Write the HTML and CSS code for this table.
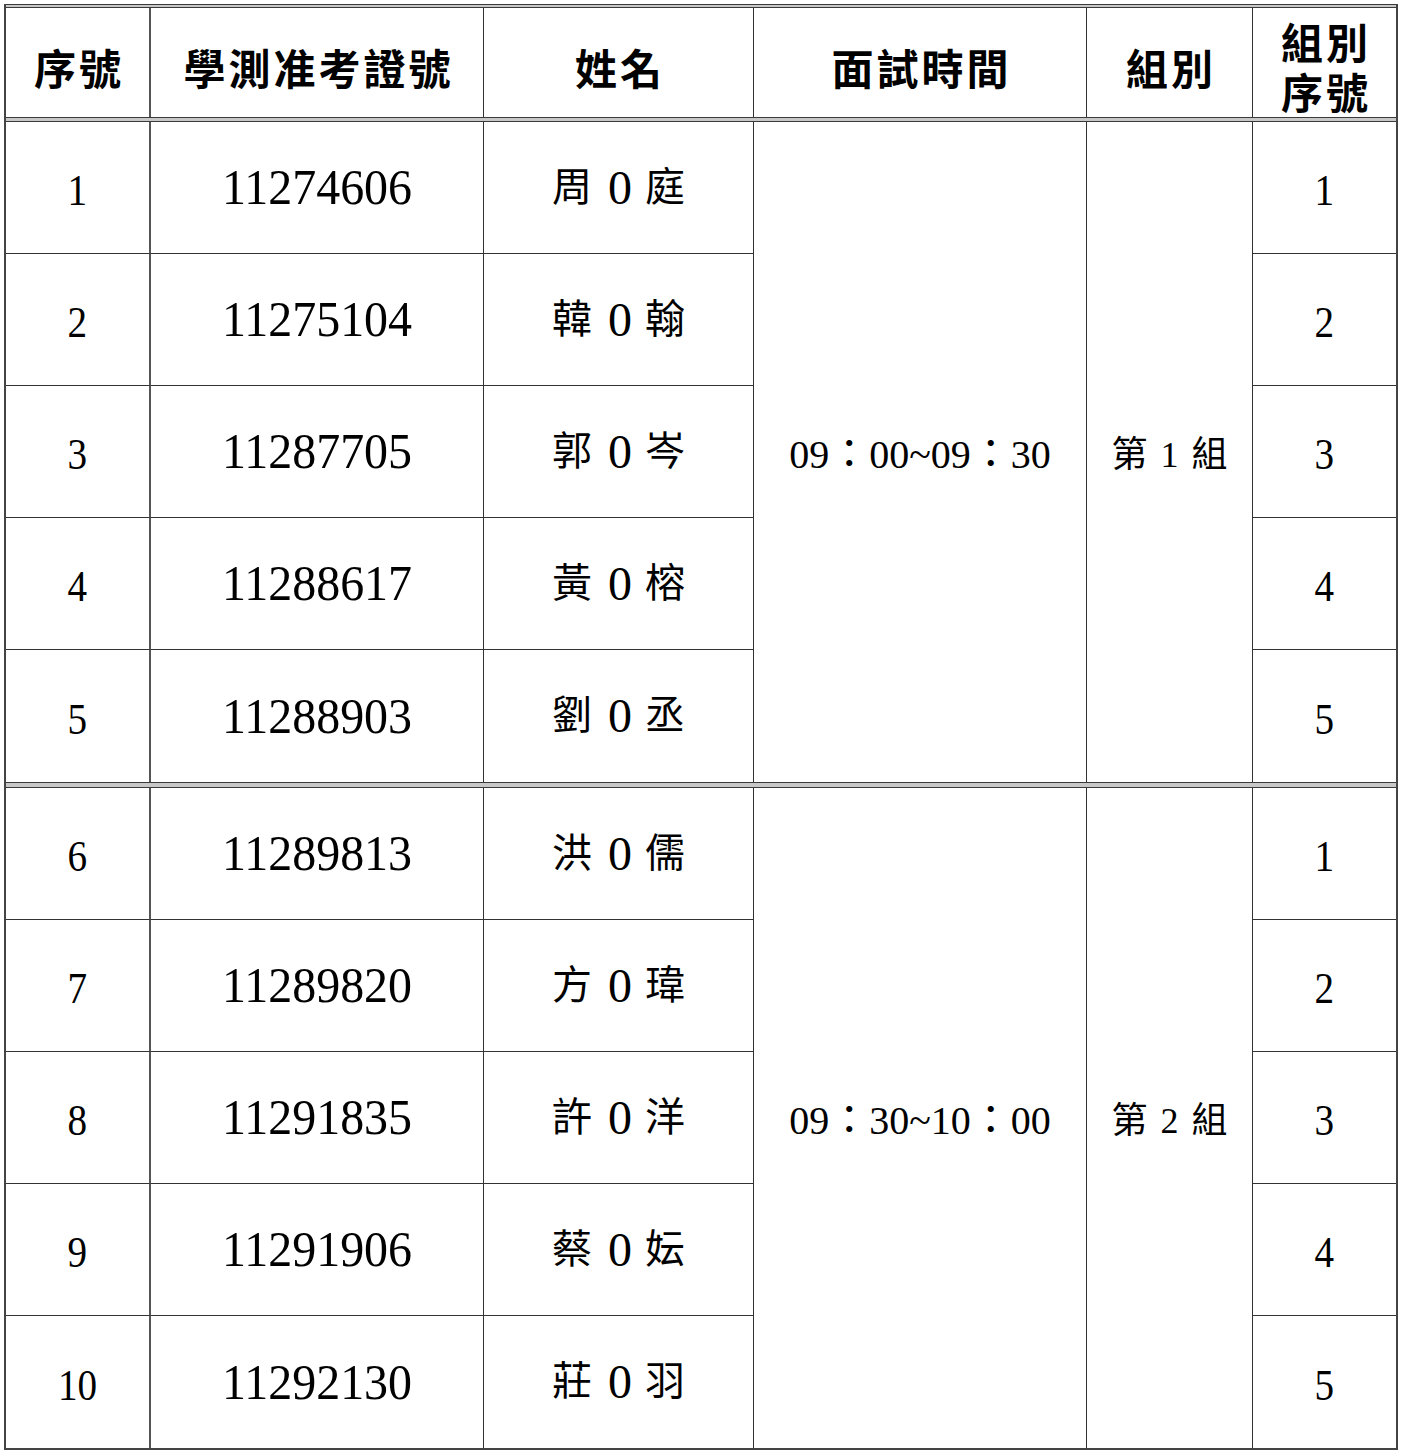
FILE: index.html
```html
<!DOCTYPE html>
<html lang="zh-Hant">
<head>
<meta charset="utf-8">
<title>面試時間表</title>
<link rel="stylesheet" href="styles.css">
</head>
<body>
<div class="sheet">
  <div class="sep sep-top"></div>

  <div class="cell hd c1">序號</div>
  <div class="cell hd">學測准考證號</div>
  <div class="cell hd">姓名</div>
  <div class="cell hd">面試時間</div>
  <div class="cell hd">組別</div>
  <div class="cell hd last two"><span>組別</span><span>序號</span></div>

  <div class="sep sep-head"></div>

  <div class="cell c1"><span class="sn">1</span></div>
  <div class="cell"><span class="en">11274606</span></div>
  <div class="cell nm">周 <span class="z">0</span> 庭</div>
  <div class="cell span5 tm">09：00~09：30</div>
  <div class="cell span5 gp">第 1 組</div>
  <div class="cell last"><span class="sn">1</span></div>

  <div class="cell c1"><span class="sn">2</span></div>
  <div class="cell"><span class="en">11275104</span></div>
  <div class="cell nm">韓 <span class="z">0</span> 翰</div>
  <div class="cell last"><span class="sn">2</span></div>

  <div class="cell c1"><span class="sn">3</span></div>
  <div class="cell"><span class="en">11287705</span></div>
  <div class="cell nm">郭 <span class="z">0</span> 岑</div>
  <div class="cell last"><span class="sn">3</span></div>

  <div class="cell c1"><span class="sn">4</span></div>
  <div class="cell"><span class="en">11288617</span></div>
  <div class="cell nm">黃 <span class="z">0</span> 榕</div>
  <div class="cell last"><span class="sn">4</span></div>

  <div class="cell c1 end"><span class="sn">5</span></div>
  <div class="cell end"><span class="en">11288903</span></div>
  <div class="cell nm end">劉 <span class="z">0</span> 丞</div>
  <div class="cell last end"><span class="sn">5</span></div>

  <div class="sep sep-mid"></div>

  <div class="cell c1"><span class="sn">6</span></div>
  <div class="cell"><span class="en">11289813</span></div>
  <div class="cell nm">洪 <span class="z">0</span> 儒</div>
  <div class="cell span5 tm">09：30~10：00</div>
  <div class="cell span5 gp">第 2 組</div>
  <div class="cell last"><span class="sn">1</span></div>

  <div class="cell c1"><span class="sn">7</span></div>
  <div class="cell"><span class="en">11289820</span></div>
  <div class="cell nm">方 <span class="z">0</span> 瑋</div>
  <div class="cell last"><span class="sn">2</span></div>

  <div class="cell c1"><span class="sn">8</span></div>
  <div class="cell"><span class="en">11291835</span></div>
  <div class="cell nm">許 <span class="z">0</span> 洋</div>
  <div class="cell last"><span class="sn">3</span></div>

  <div class="cell c1"><span class="sn">9</span></div>
  <div class="cell"><span class="en">11291906</span></div>
  <div class="cell nm">蔡 <span class="z">0</span> 妘</div>
  <div class="cell last"><span class="sn">4</span></div>

  <div class="cell c1 end"><span class="sn">10</span></div>
  <div class="cell end"><span class="en">11292130</span></div>
  <div class="cell nm end">莊 <span class="z">0</span> 羽</div>
  <div class="cell last end"><span class="sn">5</span></div>
</div>
</body>
</html>
```

FILE: styles.css
```css
html, body {
  margin: 0;
  padding: 0;
  background: #ffffff;
}

body {
  font-family: "Liberation Serif", "Noto Sans CJK TC", serif;
  color: #000;
}

.sheet {
  display: grid;
  width: 1390px;
  margin: 4px 0 0 4px;
  grid-template-columns: 145px 333px 270px 333px 166px 143px;
  grid-template-rows: 4px 109px 5px repeat(5, 132px) 6px repeat(5, 132px);
  border-left: 2px solid #444;
  border-right: 2px solid #444;
  border-bottom: 2px solid #444;
}

.sep {
  grid-column: 1 / -1;
  box-sizing: border-box;
  background: #c8c8c8;
  border-top: 1px solid #3a3a3a;
  border-bottom: 1px solid #3a3a3a;
}

.cell {
  display: flex;
  align-items: center;
  justify-content: center;
  box-sizing: border-box;
  border-right: 1px solid #333;
  border-bottom: 1px solid #333;
  min-width: 0;
}

.cell.c1 {
  border-right: 2px solid #555;
}

.cell.last {
  border-right: none;
}

.cell.end,
.cell.hd,
.cell.span5 {
  border-bottom: none;
}

.span5 {
  grid-row: span 5;
}

.hd {
  font-family: "Noto Sans CJK TC", sans-serif;
  font-weight: 700;
  font-size: 42px;
  letter-spacing: 3px;
  padding-top: 8px;
  padding-left: 3px;
  line-height: 1;
}

.hd.two {
  flex-direction: column;
  padding-top: 6px;
}

.hd.two span {
  display: block;
  height: 50px;
  line-height: 50px;
}

.en {
  display: inline-block;
  font-size: 51px;
  line-height: 1;
  transform: scaleX(0.94);
}

.sn {
  display: inline-block;
  font-size: 45px;
  line-height: 1;
  transform: scaleX(0.87);
  padding-top: 6px;
}

.nm {
  font-size: 40px;
  letter-spacing: 3px;
  padding-left: 3px;
  line-height: 1;
  white-space: pre;
}

.z {
  font-size: 48px;
  letter-spacing: 0;
}

.tm {
  font-size: 40px;
  line-height: 1;
  padding-top: 6px;
}

.gp {
  font-size: 36px;
  letter-spacing: 2px;
  padding-left: 2px;
  line-height: 1;
  padding-top: 6px;
}
```
